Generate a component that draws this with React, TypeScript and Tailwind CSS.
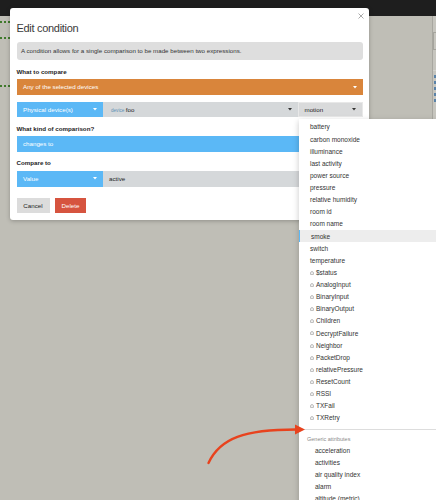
import React from "react";

const font = { fontFamily: '"Liberation Sans", Arial, sans-serif' };

const plainAttrs = [
  "battery",
  "carbon monoxide",
  "illuminance",
  "last activity",
  "power source",
  "pressure",
  "relative humidity",
  "room id",
  "room name",
  "smoke",
  "switch",
  "temperature",
];

const customAttrs = [
  "$status",
  "AnalogInput",
  "BinaryInput",
  "BinaryOutput",
  "Children",
  "DecryptFailure",
  "Neighbor",
  "PacketDrop",
  "relativePressure",
  "ResetCount",
  "RSSI",
  "TXFail",
  "TXRetry",
];

const genericAttrs = ["acceleration", "activities", "air quality index", "alarm", "altitude (metric)"];

function Caret({ light }: { light?: boolean }) {
  return (
    <svg width="4" height="3" viewBox="0 0 4 3" className="shrink-0">
      <path d="M0 0 L4 0 L2 2.4 Z" fill={light ? "#ffffff" : "#333333"} />
    </svg>
  );
}

function CustomIcon() {
  return (
    <svg width="4" height="4" viewBox="0 0 4 4" className="shrink-0">
      <path d="M0.6 3.4 L0.6 2 A1.4 1.4 0 0 1 3.4 2 L3.4 3.4 Z" fill="none" stroke="#8a8a8a" strokeWidth="0.6" />
    </svg>
  );
}

function DottedLine({ className }: { className: string }) {
  return <div className={"w-[10px] border-t-[2px] border-dotted border-[#3f7a2c] " + className} />;
}

export default function App() {
  return (
    <div className="relative w-[436px] h-[500px] overflow-hidden bg-[#bfbeb6]" style={font}>
      {/* page behind the overlay */}
      <div className="h-[16px] bg-[#1e1e1e]" />
      <div className="flex h-[484px]">
        <div className="w-[10px] flex flex-col">
          <DottedLine className="mt-[5px]" />
          <DottedLine className="mt-[14px]" />
          <DottedLine className="mt-[46px]" />
        </div>
        <div className="flex-1" />
        <div className="w-[4px] border-l border-[#a8a7a0] bg-[#c6c5be] flex flex-col">
          <div className="mt-[16px] h-[18px] border border-r-0 border-[#a5a49d] rounded-l-[1px]" />
          <div className="mt-[20px] border-t border-[#d2d1cb]" />
          <div className="mt-[4px] flex flex-col gap-[3px] pl-[1px]">
            <div className="w-[2px] h-[3px] bg-[#5b83a8]" />
            <div className="w-[2px] h-[3px] bg-[#5b83a8]" />
            <div className="w-[2px] h-[3px] bg-[#5b83a8]" />
            <div className="w-[2px] h-[3px] bg-[#5b83a8]" />
            <div className="w-[2px] h-[3px] bg-[#5b83a8]" />
          </div>
        </div>
      </div>

      {/* modal dialog */}
      <div className="absolute left-[10px] top-[8px] w-[359px] h-[211.5px] bg-white rounded-[3px] shadow-[0_1px_4px_rgba(0,0,0,0.25)] px-[6.5px] flex flex-col">
        <svg width="6" height="6" viewBox="0 0 6 6" className="absolute left-[348px] top-[5px]">
          <path d="M0.5 0.5 L5.5 5.5 M5.5 0.5 L0.5 5.5" stroke="#a0a0a0" strokeWidth="0.9" />
        </svg>
        <div className="mt-[13px] h-[14px] leading-[14px] text-[11px] tracking-[-0.3px] text-[#3a3a3a]">Edit condition</div>
        <div className="mt-[7px] h-[18px] rounded-[3px] bg-[#dedede] flex items-center pl-[4.5px] text-[6.2px] text-[#333]">
          A condition allows for a single comparison to be made between two expressions.
        </div>
        <div className="mt-[8px] h-[7px] leading-[7px] text-[6.2px] font-bold text-[#222]">What to compare</div>
        <div className="mt-[4px] h-[16px] bg-[#d9853b] flex items-center justify-between pl-[6.5px] pr-[6px] text-[6.2px] text-white">
          <span>Any of the selected devices</span>
          <Caret light />
        </div>
        <div className="mt-[6.7px] h-[15.6px] flex text-[6.2px]">
          <div className="w-[86.5px] bg-[#5bb8f6] flex items-center justify-between pl-[6.5px] pr-[6px] text-white">
            <span>Physical device(s)</span>
            <Caret light />
          </div>
          <div className="w-[195px] bg-[#d5d8da] flex items-center justify-between pl-[8px] pr-[6px]">
            <span className="flex items-baseline gap-[1.5px]">
              <span className="text-[4.6px] text-[#5e8fb5]">device</span>
              <span className="text-[#222]">foo</span>
            </span>
            <Caret />
          </div>
          <div className="flex-1 bg-[#d9dadb] border border-[#e8e8e8] flex items-center justify-between pl-[5.5px] pr-[6px] text-[#222]">
            <span>motion</span>
            <Caret />
          </div>
        </div>
        <div className="mt-[8.2px] h-[7px] leading-[7px] text-[6.2px] font-bold text-[#222]">What kind of comparison?</div>
        <div className="mt-[3.5px] h-[16.3px] bg-[#5bb8f6] flex items-center pl-[6.5px] text-[6.2px] text-white">changes to</div>
        <div className="mt-[7.2px] h-[7px] leading-[7px] text-[6.2px] font-bold text-[#222]">Compare to</div>
        <div className="mt-[4.2px] h-[16px] flex text-[6.2px]">
          <div className="w-[86.5px] bg-[#5bb8f6] flex items-center justify-between pl-[6.5px] pr-[6px] text-white">
            <span>Value</span>
            <Caret light />
          </div>
          <div className="flex-1 bg-[#d5d8da] flex items-center pl-[6px] text-[#222]">active</div>
        </div>
        <div className="mt-[11px] h-[15.6px] flex gap-[5.7px] text-[6.2px]">
          <div className="w-[33px] bg-[#dcdcdc] flex items-center justify-center text-[#222]">Cancel</div>
          <div className="w-[30.7px] bg-[#d6543f] flex items-center justify-center text-white">Delete</div>
        </div>
      </div>

      {/* attribute dropdown menu */}
      <div className="absolute left-[299px] top-[119.3px] right-0 h-[400px] bg-white shadow-[0_2px_6px_rgba(0,0,0,0.22)] pt-[1.9px] text-[6.5px] text-[#333]">
        {plainAttrs.map((a) => (
          <div
            key={a}
            className={
              "h-[12.13px] flex items-center pl-[11px] " +
              (a === "smoke" ? "bg-[#ededed] border-l-[1.5px] border-[#5bb8f6] pl-[9.5px]" : "")
            }
          >
            {a}
          </div>
        ))}
        {customAttrs.map((a) => (
          <div key={a} className="h-[12.13px] flex items-center gap-[2px] pl-[11px]">
            <CustomIcon />
            <span>{a}</span>
          </div>
        ))}
        <div className="mt-[5px] border-t border-[#dddddd]" />
        <div className="h-[14.1px] pt-[5px] pl-[8px] leading-[8px] text-[5.5px] text-[#8a8a8a]">Generic attributes</div>
        {genericAttrs.map((a) => (
          <div key={a} className="h-[12.13px] flex items-center pl-[16px]">
            {a}
          </div>
        ))}
      </div>

      {/* pointer arrow */}
      <svg className="absolute left-0 top-0 pointer-events-none" width="436" height="500" viewBox="0 0 436 500">
        <path d="M208.5 463 C 220 438, 245 429.5, 296 429.5" fill="none" stroke="#e8431e" strokeWidth="2.4" strokeLinecap="round" />
        <path d="M295 424.5 L305 429.5 L295 434.5 Z" fill="#e8431e" />
      </svg>
    </div>
  );
}
